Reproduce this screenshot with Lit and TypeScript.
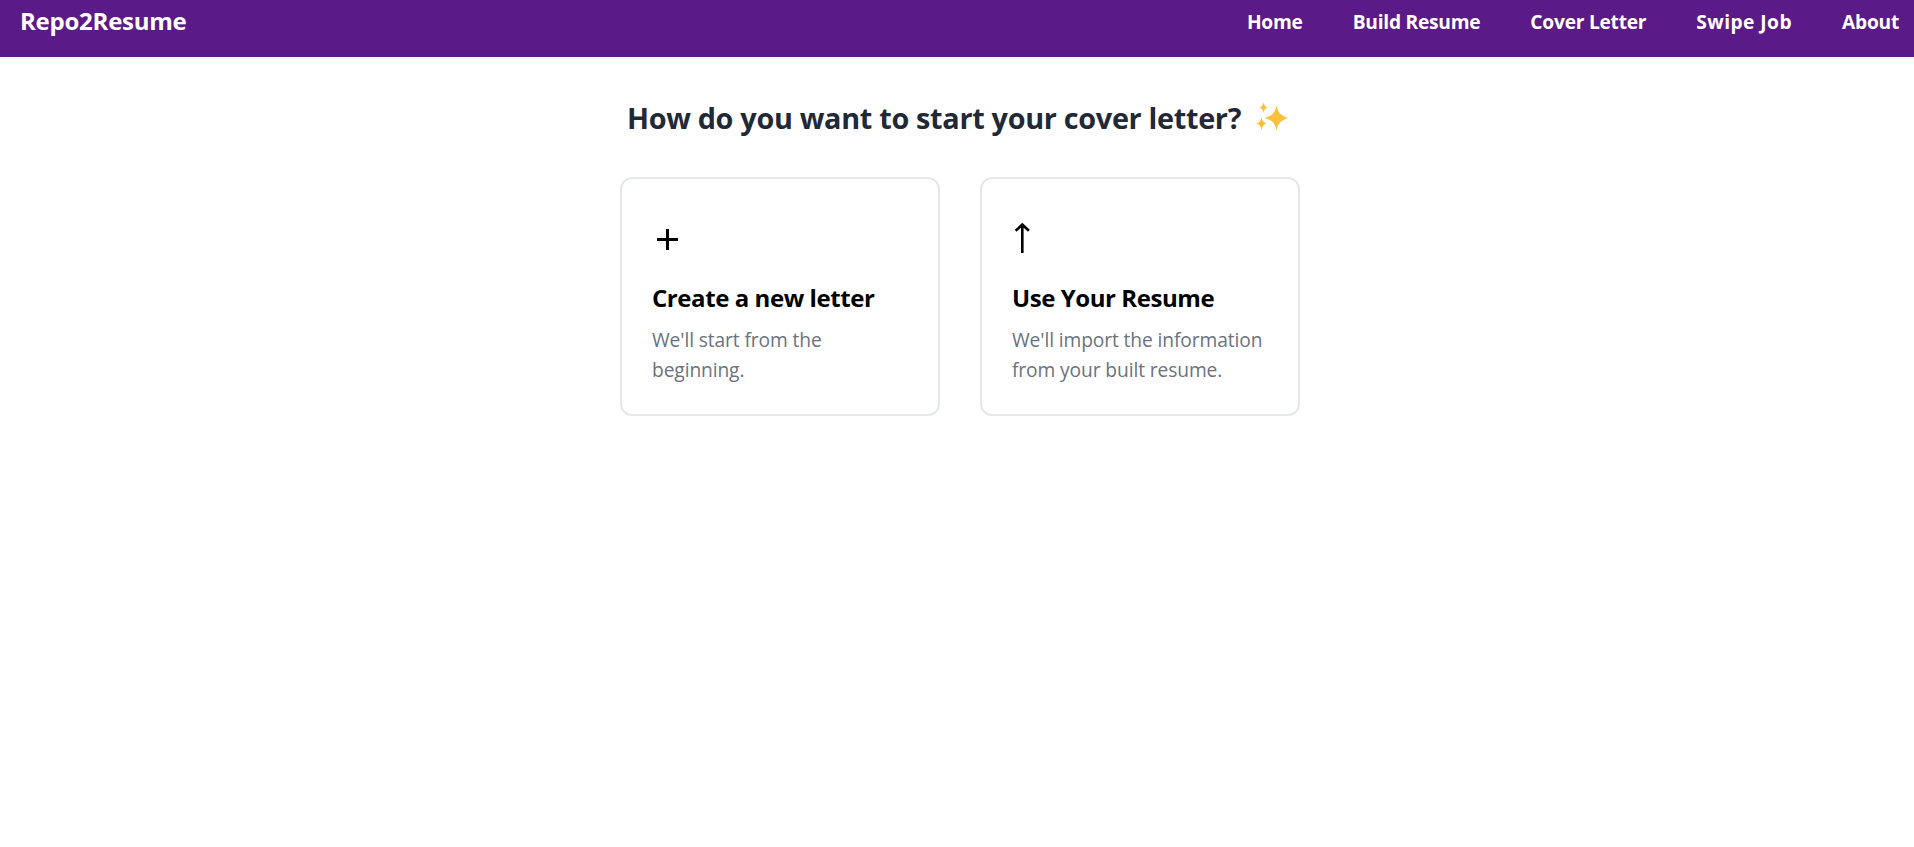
import { LitElement, html, css } from 'lit';
import { customElement } from 'lit/decorators.js';

const plusIcon = html`<svg class="icon" width="40" height="58" viewBox="0 0 40 58">
  <path fill="#000" d="M5 29h9v-9h3v9h9v3h-9v9h-3v-9h-9z" />
</svg>`;

const arrowIcon = html`<svg class="icon" width="40" height="58" viewBox="0 0 40 58">
  <path fill="none" stroke="#000" stroke-width="2.6" d="M10.300 16v28M3.700 21.800l6.600-6.300 6.600 6.300" />
</svg>`;

const cards = [
  { icon: plusIcon, title: 'Create a new letter', text: "We'll start from the beginning." },
  { icon: arrowIcon, title: 'Use Your Resume', text: "We'll import the information from your built resume." },
];

@customElement('app-root')
export class AppRoot extends LitElement {
  static styles = css`
    :host {
      display: block;
      min-height: 847px;
      background: #fff;
      font-family: 'Open Sans', 'Noto Sans', sans-serif;
    }
    .nav {
      height: 57px;
      box-sizing: border-box;
      background: #5a1a87;
      color: #fff;
      display: flex;
      justify-content: space-between;
      padding: 0 15px 0 20px;
    }
    .brand {
      font-size: 24px;
      font-weight: 700;
      line-height: 41px;
      letter-spacing: -0.25px;
    }
    .links {
      display: flex;
      gap: 50px;
      font-size: 19.2px;
      font-weight: 700;
      line-height: 43px;
      letter-spacing: -0.25px;
    }
    .links .swipe {
      letter-spacing: 0.45px;
    }
    .main {
      display: flex;
      flex-direction: column;
      align-items: center;
      padding-left: 6px;
    }
    h1 {
      margin: 42px 4px 0 0;
      font-size: 28.8px;
      line-height: 38px;
      font-weight: 700;
      color: #1f2937;
      display: flex;
      align-items: center;
      gap: 15px;
      letter-spacing: -0.3px;
    }
    .cards {
      display: flex;
      gap: 40px;
      margin-top: 40px;
    }
    .card {
      width: 320px;
      height: 239px;
      box-sizing: border-box;
      border: 2px solid #e5e7eb;
      border-radius: 12px;
      padding: 30px;
    }
    .icon {
      display: block;
    }
    h2 {
      margin: 15px 0 0;
      font-size: 24px;
      line-height: 32px;
      font-weight: 700;
      color: #000;
      letter-spacing: -0.43px;
    }
    p {
      margin: 11px 0 0;
      font-size: 19.2px;
      line-height: 30px;
      color: #6b7280;
      letter-spacing: -0.1px;
    }
  `;

  render() {
    return html`
      <div class="nav">
        <div class="brand">Repo2Resume</div>
        <div class="links">
          <span>Home</span><span>Build Resume</span><span>Cover Letter</span><span class="swipe">Swipe Job</span><span>About</span>
        </div>
      </div>
      <div class="main">
        <h1>
          How do you want to start your cover letter?
          <svg width="33" height="32" viewBox="0 0 32 32">
            <path fill="#fcc03a" d="M20 3c1 7 4 11 12 13-8 2-11 6-12 13-1-7-4-11-12-13 8-2 11-6 12-13z" />
            <path fill="#fcc03a" d="M7 0c.5 3 1.500 4.500 4 5.500-2.500 1-3.500 2.500-4 5.500-.5-3-1.500-4.500-4-5.500 2.500-1 3.500-2.500 4-5.500z" />
            <path fill="#fcc03a" d="M5 15c.5 3.500 2 5.500 5 6.500-3 1-4.500 3-5 6.500-.5-3.500-2-5.500-5-6.500 3-1 4.500-3 5-6.500z" />
          </svg>
        </h1>
        <div class="cards">
          ${cards.map(
            (c) => html`
              <div class="card">
                ${c.icon}
                <h2>${c.title}</h2>
                <p>${c.text}</p>
              </div>
            `
          )}
        </div>
      </div>
    `;
  }
}
